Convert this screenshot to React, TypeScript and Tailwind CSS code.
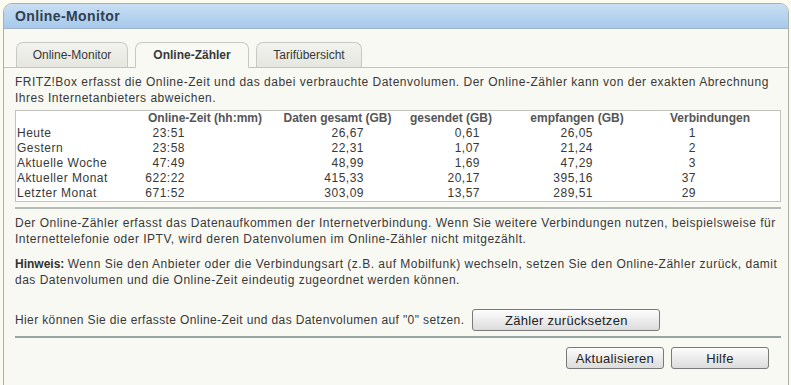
import React from 'react';

const rows = [
  { label: 'Heute', zeit: '23:51', gesamt: '26,67', gesendet: '0,61', empfangen: '26,05', verb: '1' },
  { label: 'Gestern', zeit: '23:58', gesamt: '22,31', gesendet: '1,07', empfangen: '21,24', verb: '2' },
  { label: 'Aktuelle Woche', zeit: '47:49', gesamt: '48,99', gesendet: '1,69', empfangen: '47,29', verb: '3' },
  { label: 'Aktueller Monat', zeit: '622:22', gesamt: '415,33', gesendet: '20,17', empfangen: '395,16', verb: '37' },
  { label: 'Letzter Monat', zeit: '671:52', gesamt: '303,09', gesendet: '13,57', empfangen: '289,51', verb: '29' },
];

const tabs = [
  { id: 'monitor', label: 'Online-Monitor', w: 'w-[112px]' },
  { id: 'zaehler', label: 'Online-Zähler', w: 'w-[114px]' },
  { id: 'tarif', label: 'Tarifübersicht', w: 'w-[106px]' },
];

function Button({ children, className }: { children: React.ReactNode; className: string }) {
  return (
    <button
      className={`h-[22px] rounded-[3px] border border-[#7a7a7a] bg-gradient-to-b from-[#fdfdfd] to-[#dcdcdc] text-[13px] text-[#222] leading-none tracking-[0.3px] ${className}`}
    >
      {children}
    </button>
  );
}

function App() {
  const active = 'zaehler';

  return (
    <div className="min-h-screen bg-[#fbfbef] pl-[3px] pt-[3px] font-['Liberation_Sans',Arial,sans-serif] text-[12px] text-[#383838] tracking-[0.5px]">
      <div className="w-[786px] h-[400px] rounded-t-[9px] border border-[#a9b1a9] bg-[#f9f9f4] overflow-hidden">
        {/* Header */}
        <div className="h-[25px] border-b border-[#9fb4c8] bg-gradient-to-b from-[#c9def3] to-[#a7c9ec] pl-[11px] flex items-center">
          <span className="text-[14px] font-bold text-[#2f3f4f] tracking-[0.4px]">Online-Monitor</span>
        </div>

        {/* Tabs */}
        <div className="mt-[13px] flex items-end gap-[7px] pl-[12px] border-b border-[#c4c4c0] h-[26px] tracking-normal">
          {tabs.map((t) => (
            <div
              key={t.id}
              className={`${t.w} h-[25px] rounded-t-[7px] border border-[#c8c8c4] flex items-center justify-center ${
                t.id === active
                  ? 'bg-[#f9f9f4] border-b-[#f9f9f4] font-bold h-[26px] -mb-px'
                  : 'bg-gradient-to-b from-[#f2f2ee] to-[#e6e6e1] border-b-0'
              }`}
            >
              {t.label}
            </div>
          ))}
        </div>

        <div className="pl-[11px] pr-[7px]">
          <p className="mt-[6px] leading-[16px]">
            FRITZ!Box erfasst die Online-Zeit und das dabei verbrauchte Datenvolumen. Der Online-Zähler kann von der exakten Abrechnung Ihres Internetanbieters abweichen.
          </p>

          {/* Table */}
          <div className="mt-[4px] border border-[#c2c2be] bg-white">
            <table className="w-full border-collapse table-fixed leading-[15px]">
              <colgroup>
                <col className="w-[124px]" />
                <col className="w-[130px]" />
                <col className="w-[135px]" />
                <col className="w-[92px]" />
                <col className="w-[160px]" />
                <col className="w-[106px]" />
                <col />
              </colgroup>
              <thead>
                <tr className="h-[14px] text-[#555] tracking-normal">
                  <th></th>
                  <th className="text-center font-bold">Online-Zeit (hh:mm)</th>
                  <th className="text-center font-bold">Daten gesamt (GB)</th>
                  <th className="text-center font-bold">gesendet (GB)</th>
                  <th className="text-center font-bold">empfangen (GB)</th>
                  <th className="text-center font-bold">Verbindungen</th>
                  <th></th>
                </tr>
              </thead>
              <tbody>
                {rows.map((r) => (
                  <tr key={r.label} className="h-[15px]">
                    <td className="pl-[1px]">{r.label}</td>
                    <td className="text-right pr-[85px]">{r.zeit}</td>
                    <td className="text-right pr-[41px]">{r.gesamt}</td>
                    <td className="text-right pr-[17px]">{r.gesendet}</td>
                    <td className="text-right pr-[64px]">{r.empfangen}</td>
                    <td className="text-right pr-[67px]">{r.verb}</td>
                    <td></td>
                  </tr>
                ))}
              </tbody>
            </table>
          </div>

          <div className="mt-[5px] h-[2px] bg-[#b4bcb8]" />

          <p className="mt-[6px] leading-[16px]">
            Der Online-Zähler erfasst das Datenaufkommen der Internetverbindung. Wenn Sie weitere Verbindungen nutzen, beispielsweise für Internettelefonie oder IPTV, wird deren Datenvolumen im Online-Zähler nicht mitgezählt.
          </p>

          <p className="mt-[9px] leading-[16px]">
            <b className="text-[#333] tracking-normal">Hinweis: </b>Wenn Sie den Anbieter oder die Verbindungsart (z.B. auf Mobilfunk) wechseln, setzen Sie den Online-Zähler zurück, damit das Datenvolumen und die Online-Zeit eindeutig zugeordnet werden können.
          </p>

          <div className="mt-[21px] flex items-center gap-[8px]">
            <span className="tracking-[0.38px]">Hier können Sie die erfasste Online-Zeit und das Datenvolumen auf "0" setzen.</span>
            <Button className="w-[188px]">Zähler zurücksetzen</Button>
          </div>

          <div className="mt-[5px] h-[2px] bg-[#96a6a0]" />

          <div className="mt-[9px] flex justify-end gap-[7px] pr-[12px]">
            <Button className="w-[98px]">Aktualisieren</Button>
            <Button className="w-[98px]">Hilfe</Button>
          </div>
        </div>
      </div>
    </div>
  );
}

export default App;
